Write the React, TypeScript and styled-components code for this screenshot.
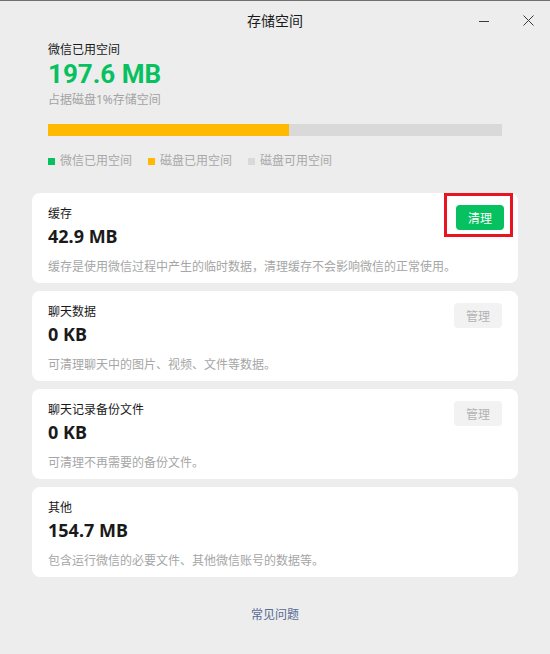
import React from "react";
import styled, { createGlobalStyle } from "styled-components";

const Global = createGlobalStyle`
  html, body { margin: 0; padding: 0; background: #ededed; }
  * { box-sizing: border-box; }
  body { font-family: "Noto Sans", "Noto Sans CJK SC", sans-serif; }
`;

const Window = styled.div`
  width: 550px;
  height: 654px;
  background: #ededed;
  border-top: 1px solid #707070;
  display: flex;
  flex-direction: column;
  overflow: hidden;
`;

const TitleBar = styled.div`
  height: 40px;
  display: grid;
  grid-template-columns: 1fr auto 1fr;
  align-items: center;
`;

const Title = styled.div`
  grid-column: 2;
  font-size: 14px;
  color: #1a1a1a;
  line-height: 20px;
  margin-top: -1px;
`;

const Controls = styled.div`
  grid-column: 3;
  justify-self: end;
  display: flex;
  align-self: stretch;
`;

const CtrlButton = styled.div`
  width: 44px;
  display: flex;
  align-items: center;
  justify-content: center;
  color: #333;
  margin-top: -1px;
`;

const Summary = styled.div`
  padding: 0 48px;
  display: flex;
  flex-direction: column;
`;

const Label = styled.div`
  font-size: 12px;
  line-height: 18px;
  color: #1a1a1a;
`;

const BigValue = styled.div`
  font-family: Roboto, "Noto Sans", sans-serif;
  font-size: 26px;
  font-weight: 700;
  line-height: 30px;
  color: #07c160;
`;

const SubText = styled.div`
  font-size: 12px;
  line-height: 18px;
  color: #a3a3a3;
  margin-top: 2px;
`;

const Bar = styled.div`
  margin-top: 15px;
  height: 12px;
  background: #d9d9d9;
  display: flex;
`;

const BarFill = styled.div`
  height: 100%;
  background: #ffb900;
`;

const Legend = styled.div`
  margin-top: 16px;
  display: flex;
  gap: 16px;
`;

const LegendItem = styled.div`
  display: flex;
  align-items: center;
  gap: 5px;
  font-size: 12px;
  line-height: 18px;
  color: #a8a8a8;
`;

const Swatch = styled.span<{ $color: string }>`
  width: 7px;
  height: 7px;
  background: ${(p) => p.$color};
`;

const CardList = styled.div`
  margin: 23px 32px 0;
  display: flex;
  flex-direction: column;
  gap: 8px;
`;

const Card = styled.div`
  position: relative;
  height: 90px;
  background: #fff;
  border-radius: 8px;
  padding: 12px 16px 0;
  display: flex;
  justify-content: space-between;
  align-items: flex-start;
`;

const CardText = styled.div`
  display: flex;
  flex-direction: column;
`;

const CardTitle = styled.div`
  font-size: 12px;
  line-height: 18px;
  color: #1a1a1a;
`;

const CardValue = styled.div`
  font-size: 18px;
  font-weight: 700;
  line-height: 24px;
  color: #1a1a1a;
  margin-top: 1px;
`;

const CardDesc = styled.div`
  font-size: 12px;
  line-height: 17px;
  color: #a6a6a6;
  margin-top: 10px;
  white-space: nowrap;
`;

const ActionButton = styled.div<{ $primary?: boolean }>`
  width: 48px;
  height: 25px;
  border-radius: 4px;
  display: flex;
  align-items: center;
  justify-content: center;
  font-size: 12px;
  background: ${(p) => (p.$primary ? "#07c160" : "#f2f2f2")};
  color: ${(p) => (p.$primary ? "#fff" : "#b2b2b2")};
  flex-shrink: 0;
`;

const Highlight = styled.div`
  position: absolute;
  left: 412px;
  top: 0;
  width: 69px;
  height: 44px;
  border: 3px solid #e8141f;
  pointer-events: none;
`;

const Footer = styled.div`
  margin-top: 29px;
  text-align: center;
  font-size: 12px;
  line-height: 18px;
  color: #576b95;
`;

type Item = {
  title: string;
  value: string;
  desc: string;
  action?: string;
  primary?: boolean;
  highlight?: boolean;
};

const items: Item[] = [
  {
    title: "缓存",
    value: "42.9 MB",
    desc: "缓存是使用微信过程中产生的临时数据，清理缓存不会影响微信的正常使用。",
    action: "清理",
    primary: true,
    highlight: true,
  },
  {
    title: "聊天数据",
    value: "0 KB",
    desc: "可清理聊天中的图片、视频、文件等数据。",
    action: "管理",
  },
  {
    title: "聊天记录备份文件",
    value: "0 KB",
    desc: "可清理不再需要的备份文件。",
    action: "管理",
  },
  {
    title: "其他",
    value: "154.7 MB",
    desc: "包含运行微信的必要文件、其他微信账号的数据等。",
  },
];

export default function App() {
  return (
    <>
      <Global />
      <Window>
        <TitleBar>
          <Title>存储空间</Title>
          <Controls>
            <CtrlButton>
              <svg width="10" height="10" viewBox="0 0 10 10">
                <line x1="0" y1="5.5" x2="10" y2="5.5" stroke="#3a3a3a" strokeWidth="1" />
              </svg>
            </CtrlButton>
            <CtrlButton>
              <svg width="11" height="11" viewBox="0 0 11 11">
                <path d="M0.5 0.5 L10.5 10.5 M10.5 0.5 L0.5 10.5" stroke="#3a3a3a" strokeWidth="1" fill="none" />
              </svg>
            </CtrlButton>
          </Controls>
        </TitleBar>
        <Summary>
          <Label>微信已用空间</Label>
          <BigValue>197.6 MB</BigValue>
          <SubText>占据磁盘1%存储空间</SubText>
          <Bar>
            <BarFill style={{ width: "53.1%" }} />
          </Bar>
          <Legend>
            <LegendItem>
              <Swatch $color="#07c160" />
              微信已用空间
            </LegendItem>
            <LegendItem>
              <Swatch $color="#ffb900" />
              磁盘已用空间
            </LegendItem>
            <LegendItem>
              <Swatch $color="#d9d9d9" />
              磁盘可用空间
            </LegendItem>
          </Legend>
        </Summary>
        <CardList>
          {items.map((it) => (
            <Card key={it.title}>
              <CardText>
                <CardTitle>{it.title}</CardTitle>
                <CardValue>{it.value}</CardValue>
                <CardDesc>{it.desc}</CardDesc>
              </CardText>
              {it.action && <ActionButton $primary={it.primary}>{it.action}</ActionButton>}
              {it.highlight && <Highlight />}
            </Card>
          ))}
        </CardList>
        <Footer>常见问题</Footer>
      </Window>
    </>
  );
}
